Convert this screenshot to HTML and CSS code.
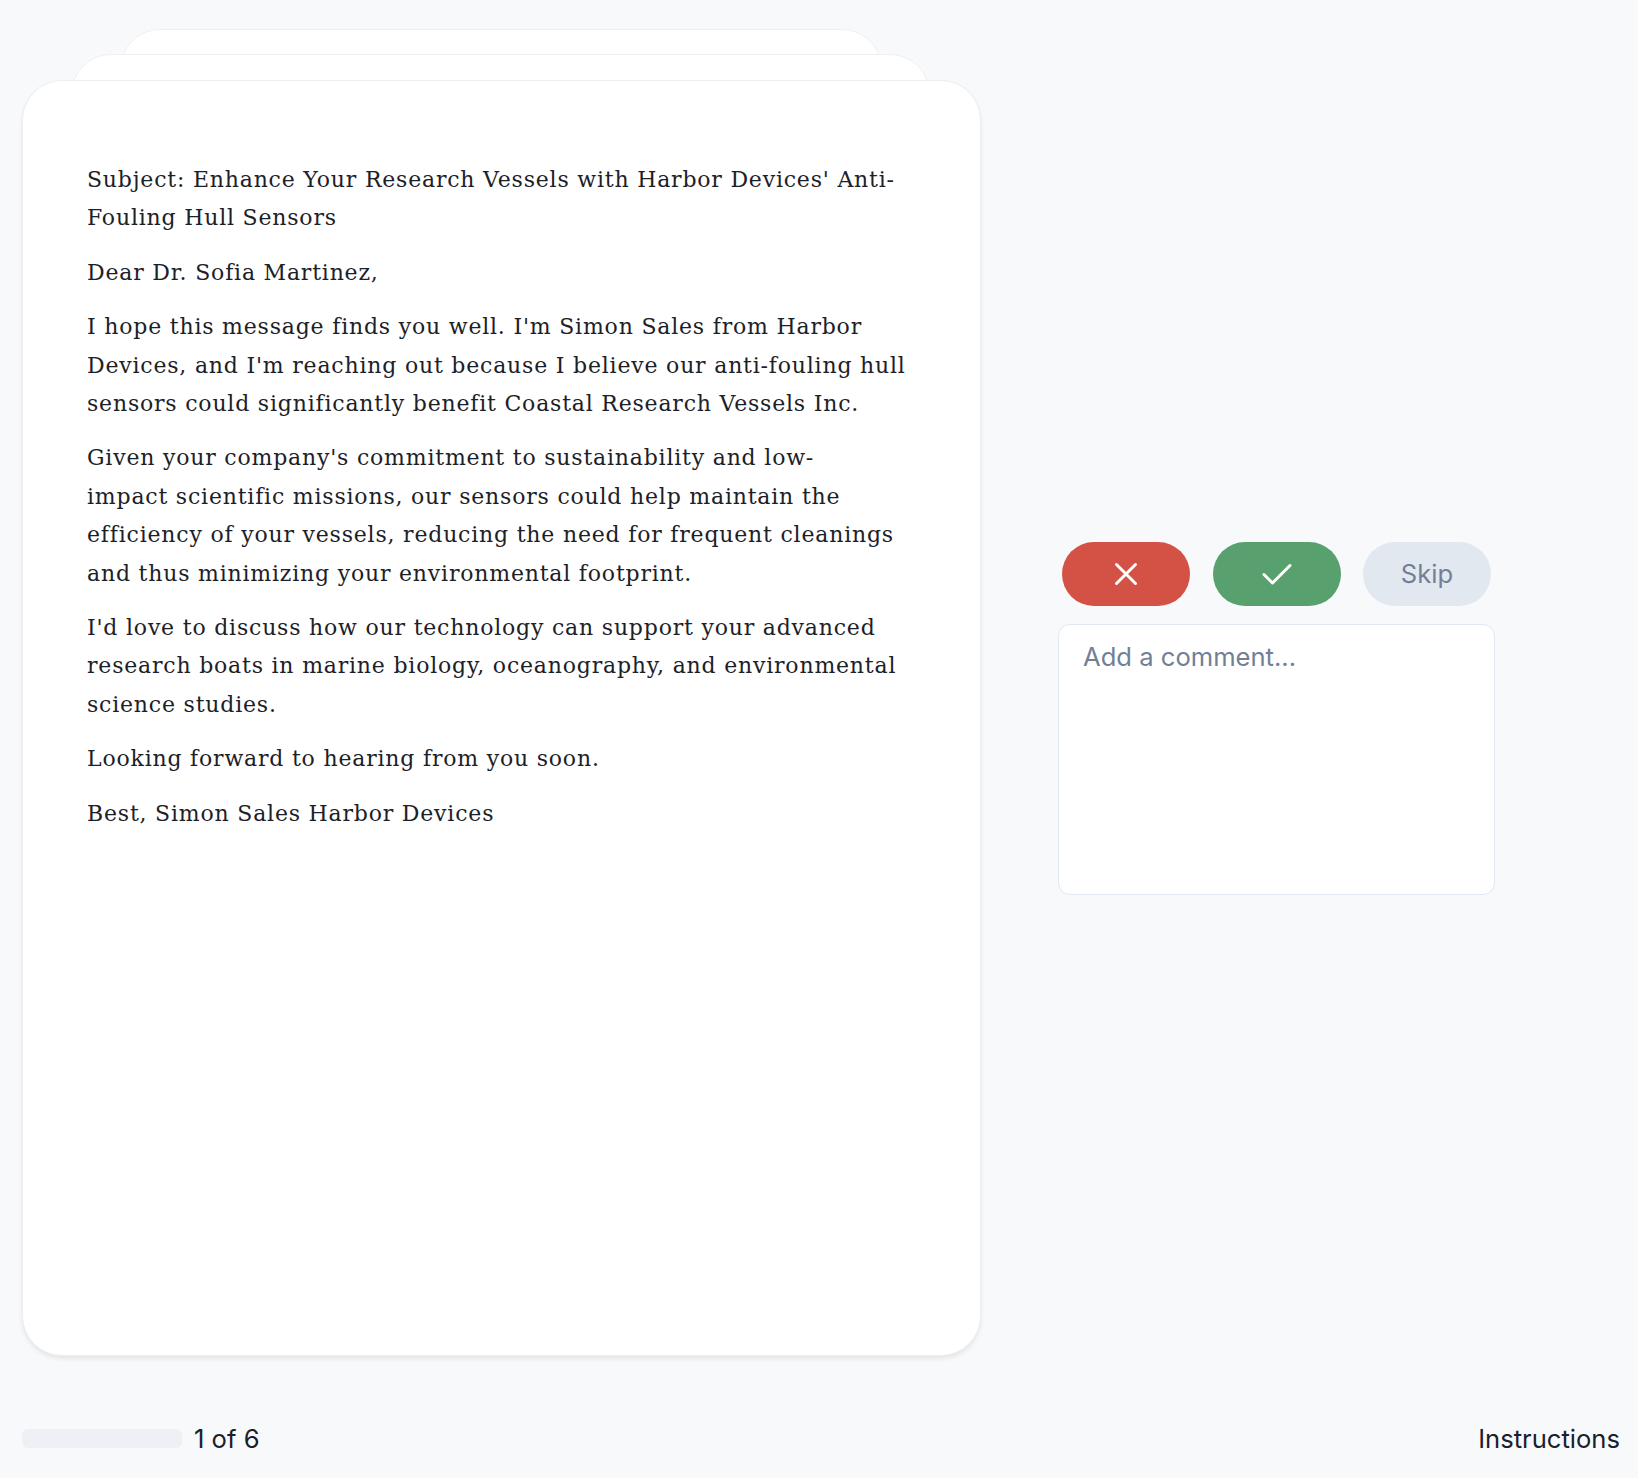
FILE: index.html
```html
<!DOCTYPE html>
<html lang="en">
<head>
<meta charset="utf-8">
<title>Review</title>
<link rel="stylesheet" href="styles.css">
</head>
<body>
<div class="page">
  <main class="main">
    <div class="row">
      <section class="card">
        <div class="card-back card-back-2"></div>
        <div class="card-back card-back-1"></div>
        <div class="card-body">
          <p>Subject: Enhance Your Research Vessels with Harbor Devices' Anti-Fouling Hull Sensors</p>
          <p>Dear Dr. Sofia Martinez,</p>
          <p>I hope this message finds you well. I'm Simon Sales from Harbor Devices, and I'm reaching out because I believe our anti-fouling hull sensors could significantly benefit Coastal Research Vessels Inc.</p>
          <p>Given your company's commitment to sustainability and low-<br>impact scientific missions, our sensors could help maintain the efficiency of your vessels, reducing the need for frequent cleanings and thus minimizing your environmental footprint.</p>
          <p>I'd love to discuss how our technology can support your advanced research boats in marine biology, oceanography, and environmental science studies.</p>
          <p>Looking forward to hearing from you soon.</p>
          <p>Best, Simon Sales Harbor Devices</p>
        </div>
      </section>
      <aside class="panel">
        <div class="actions">
          <button class="btn btn-reject" aria-label="Reject">
            <svg width="24" height="24" viewBox="0 0 24 24" fill="none" stroke="#fff" stroke-width="3" stroke-linecap="round"><path d="M2.5 2.5 L21.5 21.5 M21.5 2.5 L2.5 21.5"/></svg>
          </button>
          <button class="btn btn-accept" aria-label="Accept">
            <svg width="30" height="24" viewBox="0 0 30 24" fill="none" stroke="#fff" stroke-width="3" stroke-linecap="round" stroke-linejoin="round"><path d="M2 12.5 L10.5 21 L28 3.5"/></svg>
          </button>
          <button class="btn btn-skip">Skip</button>
        </div>
        <textarea class="comment" placeholder="Add a comment..."></textarea>
      </aside>
    </div>
  </main>
  <footer class="footer">
    <div class="progress">
      <div class="progress-track"></div>
      <span class="progress-label">1 of 6</span>
    </div>
    <span class="instructions">Instructions</span>
  </footer>
</div>
</body>
</html>
```

FILE: styles.css
```css
* { box-sizing: border-box; }
html, body { margin: 0; padding: 0; }
body {
  background: #f8f9fb;
  font-family: Inter, "Noto Sans", sans-serif;
  color: #1a202c;
}
.page {
  height: 1478px;
  display: flex;
  flex-direction: column;
}
.main {
  padding: 80px 22px 0 22px;
}
.row {
  display: flex;
  align-items: center;
}
.card {
  position: relative;
  width: 959px;
  height: 1276px;
  flex: none;
}
.card-back {
  position: absolute;
  background: #fff;
  border-radius: 40px;
  border: 1px solid #eef0f3;
  height: 200px;
}
.card-back-1 { top: -26px; left: 49px; right: 51px; }
.card-back-2 { top: -51px; left: 98px; right: 99px; }
.card-body {
  position: relative;
  height: 100%;
  background: #fff;
  border-radius: 40px;
  border: 1px solid #eceef1;
  box-shadow: 0 3px 4px rgba(0, 0, 0, 0.08);
  padding: 64px 64px;
  font-family: "DejaVu Serif", "Liberation Serif", serif;
  font-size: 22px;
  letter-spacing: 0.8px;
  line-height: 38.4px;
  color: #1c2127;
}
.card-body p { margin: 16px 0; }
.panel {
  margin-left: 77px;
  width: 437px;
  display: flex;
  flex-direction: column;
  gap: 18px;
}
.actions {
  display: flex;
  justify-content: space-between;
  padding: 0 4px;
}
.btn {
  width: 128px;
  height: 64px;
  border: none;
  border-radius: 32px;
  display: flex;
  align-items: center;
  justify-content: center;
  padding: 0;
  font-family: Inter, sans-serif;
}
.btn-reject { background: #d45145; }
.btn-accept { background: #58a06e; }
.btn-skip {
  background: #e2e8f0;
  color: #718096;
  font-size: 25.6px;
}
.comment {
  width: 437px;
  height: 271px;
  border: 1px solid #e2e8f0;
  border-radius: 12px;
  background: #fff;
  padding: 14px 24px;
  font-family: Inter, sans-serif;
  font-size: 25.6px;
  line-height: 36px;
  resize: none;
  color: #1a202c;
}
.comment::placeholder { color: #718096; }
.footer {
  margin-top: auto;
  height: 80px;
  padding: 0 18px 0 22px;
  display: flex;
  align-items: center;
  justify-content: space-between;
}
.progress {
  display: flex;
  align-items: center;
  gap: 12px;
}
.progress-track {
  width: 160px;
  height: 19px;
  border-radius: 6px;
  background: #edf1f6;
}
.progress-label, .instructions {
  font-size: 25.6px;
  color: #1a202c;
}
```
